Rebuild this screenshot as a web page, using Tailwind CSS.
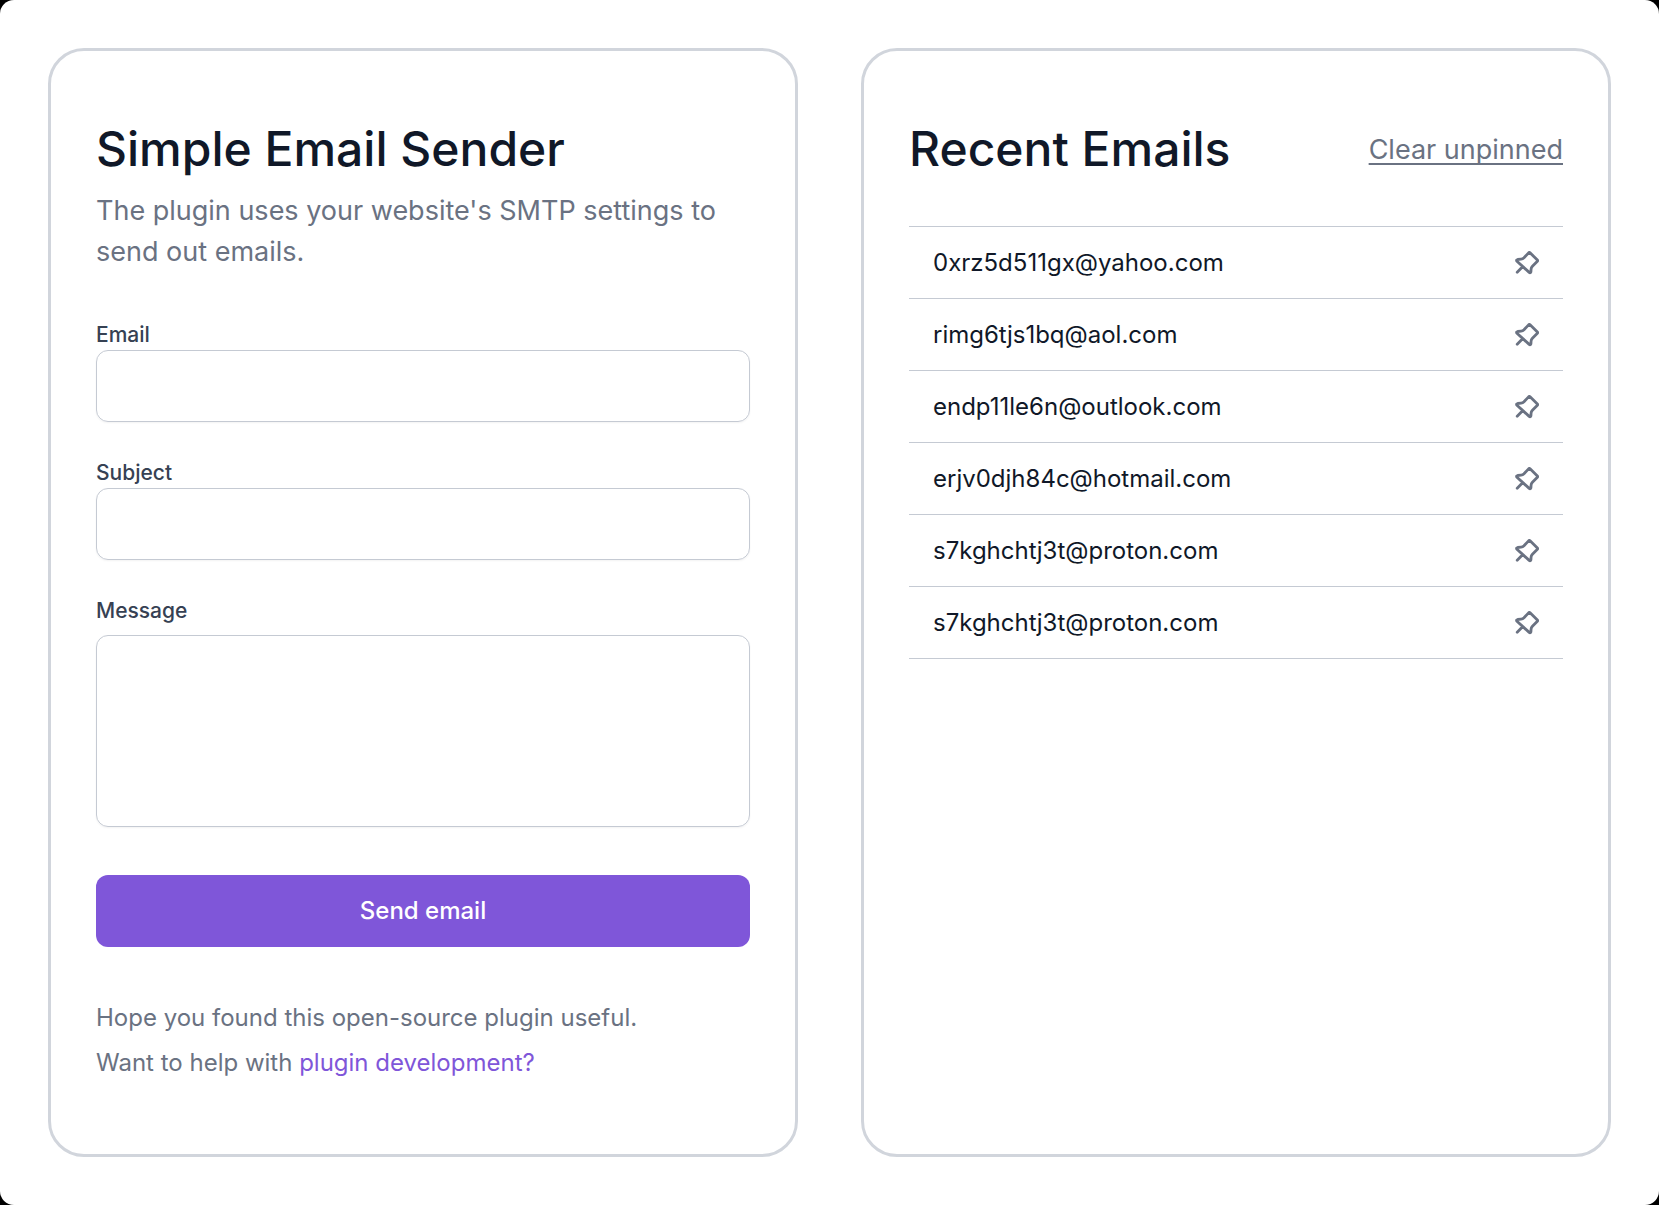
<!DOCTYPE html>
<html lang="en">
<head>
    <meta charset="UTF-8">
    <meta name="viewport" content="width=device-width, initial-scale=1.0">
    <title>Simple Email Sender</title>
    <script src="https://cdn.jsdelivr.net/npm/@tailwindcss/browser@4"></script>
    <style>
        body {
            font-family: 'Inter', sans-serif;
        }
    </style>
</head>
<body class="bg-black">

    <!-- Pin icon, shared by every row of the list -->
    <svg class="hidden" aria-hidden="true">
        <symbol id="icon-pin" viewBox="0 0 24 24">
            <path stroke-width="2.8" stroke-linecap="round" stroke-linejoin="round" d="M14.8 1.6 L22.4 9 Q23 9.6 22.4 10.2 L17.4 15.2 Q16.2 16.4 16.1 18 L15.9 20.8 Q15.4 22.4 14.2 21.4 L1.7 10 Q1.2 8.8 2.6 8.5 L6 8.1 Q7.8 7.9 9 6.7 L13.8 1.6 Q14.3 1.2 14.8 1.6 Z M7.8 15.6 L2.2 21.2"/>
        </symbol>
    </svg>

    <main class="grid min-h-screen grid-cols-2 gap-[63px] rounded-[14px] bg-white p-12">

        <section class="rounded-[36px] border-3 border-gray-300 px-[45px] pt-[74px] pb-[67px]">
            <h1 class="text-5xl/[48px] font-medium text-gray-900">Simple Email Sender</h1>
            <p class="mt-[17px] text-[27px]/[41px] text-gray-500">The plugin uses your website's SMTP settings to send out emails.</p>

            <form class="mt-12" onsubmit="return false">
                <label for="email" class="block text-[21px]/[30px] font-medium text-gray-700">Email</label>
                <input type="email" id="email" name="email"
                       class="block h-[72px] w-full rounded-xl border border-[#c5cad3] px-4 text-2xl shadow-xs">

                <label for="subject" class="mt-9 block text-[21px]/[30px] font-medium text-gray-700">Subject</label>
                <input type="text" id="subject" name="subject"
                       class="block h-[72px] w-full rounded-xl border border-[#c5cad3] px-4 text-2xl shadow-xs">

                <label for="message" class="mt-9 block text-[21px]/[30px] font-medium text-gray-700">Message</label>
                <textarea id="message" name="message"
                          class="mt-[9px] block h-48 w-full resize-none rounded-xl border border-[#c5cad3] p-4 text-2xl shadow-xs"></textarea>

                <button type="submit" class="mt-12 block h-[72px] w-full rounded-xl bg-[#7f56d9] text-2xl font-medium text-white">Send email</button>
            </form>

            <p class="mt-12 text-2xl/[45px] text-gray-500">
                Hope you found this open-source plugin useful.<br>
                Want to help with <a href="#" class="text-[#7f56d9]">plugin development?</a>
            </p>
        </section>

        <section class="rounded-[36px] border-3 border-gray-300 px-[45px] pt-[74px] pb-[67px]">
            <div class="flex items-center justify-between">
                <h2 class="text-5xl/[48px] font-medium text-gray-900">Recent Emails</h2>
                <button type="button" class="text-[27px]/[41px] text-gray-500 underline decoration-2 underline-offset-4 [text-decoration-skip-ink:none]">Clear unpinned</button>
            </div>

            <ul class="mt-[53px] border-b border-[#c5cad3] text-2xl text-gray-900">
                <li class="flex h-[72px] items-center justify-between border-t border-[#c5cad3] px-6">
                    0xrz5d511gx@yahoo.com
                    <button type="button" aria-label="Pin" class="text-gray-500"><svg class="size-6 overflow-visible fill-none stroke-current"><use href="#icon-pin"/></svg></button>
                </li>
                <li class="flex h-[72px] items-center justify-between border-t border-[#c5cad3] px-6">
                    rimg6tjs1bq@aol.com
                    <button type="button" aria-label="Pin" class="text-gray-500"><svg class="size-6 overflow-visible fill-none stroke-current"><use href="#icon-pin"/></svg></button>
                </li>
                <li class="flex h-[72px] items-center justify-between border-t border-[#c5cad3] px-6">
                    endp11le6n@outlook.com
                    <button type="button" aria-label="Pin" class="text-gray-500"><svg class="size-6 overflow-visible fill-none stroke-current"><use href="#icon-pin"/></svg></button>
                </li>
                <li class="flex h-[72px] items-center justify-between border-t border-[#c5cad3] px-6">
                    erjv0djh84c@hotmail.com
                    <button type="button" aria-label="Pin" class="text-gray-500"><svg class="size-6 overflow-visible fill-none stroke-current"><use href="#icon-pin"/></svg></button>
                </li>
                <li class="flex h-[72px] items-center justify-between border-t border-[#c5cad3] px-6">
                    s7kghchtj3t@proton.com
                    <button type="button" aria-label="Pin" class="text-gray-500"><svg class="size-6 overflow-visible fill-none stroke-current"><use href="#icon-pin"/></svg></button>
                </li>
                <li class="flex h-[72px] items-center justify-between border-t border-[#c5cad3] px-6">
                    s7kghchtj3t@proton.com
                    <button type="button" aria-label="Pin" class="text-gray-500"><svg class="size-6 overflow-visible fill-none stroke-current"><use href="#icon-pin"/></svg></button>
                </li>
            </ul>
        </section>

    </main>
</body>
</html>
